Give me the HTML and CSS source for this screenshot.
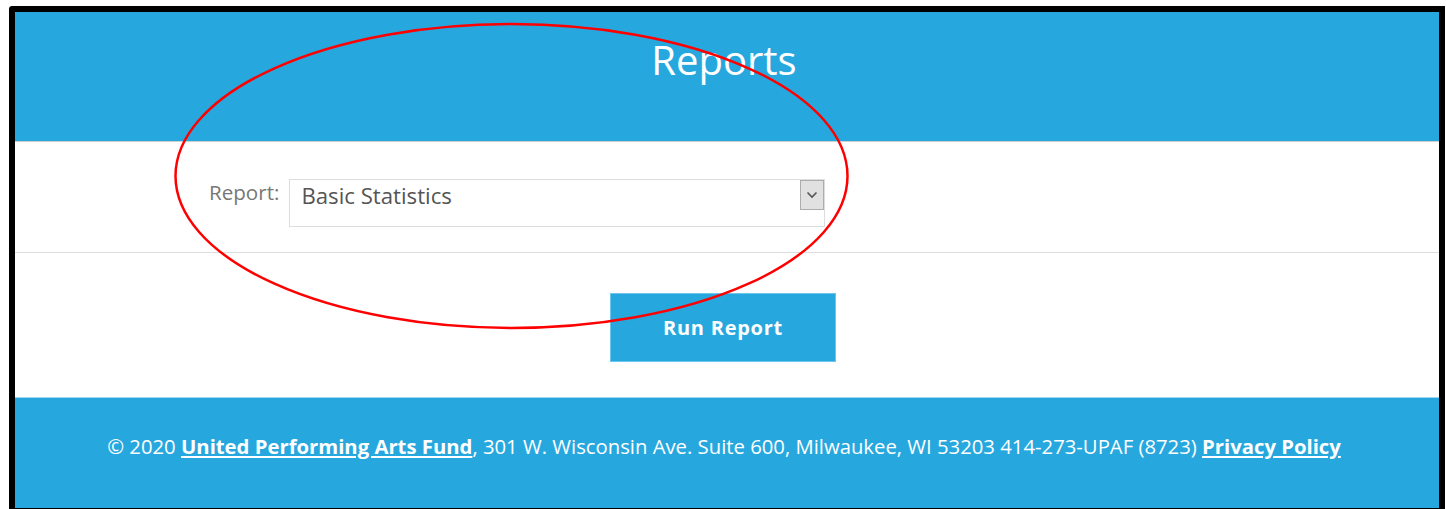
FILE: index.html
```html
<!DOCTYPE html>
<html lang="en">
<head>
<meta charset="utf-8">
<title>Reports</title>
<link rel="stylesheet" href="styles.css">
</head>
<body>
<div class="frame">
  <header class="banner">
    <h1 class="banner-title">Reports</h1>
  </header>

  <section class="filters">
    <div class="field">
      <label class="field-label">Report:</label>
      <div class="select">
        <span class="select-value">Basic Statistics</span>
        <span class="select-arrow">
          <svg width="12" height="8" viewBox="0 0 12 8" aria-hidden="true">
            <path d="M1.5 1.5 L6 6 L10.5 1.5" fill="none" stroke="#555" stroke-width="1.6"/>
          </svg>
        </span>
      </div>
    </div>
  </section>

  <section class="actions">
    <button class="run-btn" type="button">Run Report</button>
  </section>

  <footer class="site-footer">
    <p class="footer-text">© 2020 <a href="#">United Performing Arts Fund</a>, 301 W. Wisconsin Ave. Suite 600, Milwaukee, WI 53203 414-273-UPAF (8723) <a href="#">Privacy Policy</a></p>
  </footer>
</div>

<!-- highlight ring drawn over the report picker -->
<svg class="callout" width="1446" height="509" viewBox="0 0 1446 509" aria-hidden="true">
  <ellipse cx="511.5" cy="176" rx="336" ry="152" fill="none" stroke="#f00" stroke-width="2.5"/>
</svg>
</body>
</html>
```

FILE: styles.css
```css
* {
  box-sizing: border-box;
}

html,
body {
  margin: 0;
  padding: 0;
  background: #fff;
  overflow: hidden;
  height: 509px;
}

body {
  position: relative;
  font-family: "Open Sans", "Noto Sans", sans-serif;
}

.frame {
  margin: 6px 1px 0 9px;
  border: 6px solid #000;
  border-top-left-radius: 3px;
  display: flex;
  flex-direction: column;
}

/* page banner */
.banner {
  height: 130px;
  background: #26a8df;
  border-bottom: 1px solid #cfcfcf;
  padding-top: 21px;
}

.banner-title {
  margin: 0;
  text-align: center;
  color: #fff;
  font-weight: 400;
  font-size: 40px;
  line-height: 54px;
  padding-right: 6px;
}

/* report picker row */
.filters {
  height: 111px;
  padding: 37px 0 0 194px;
  border-bottom: 1px solid #ddd;
}

.field {
  display: flex;
  align-items: flex-start;
  gap: 10px;
}

.field-label {
  font-size: 20.6px;
  line-height: 27px;
  color: #777;
}

.select {
  width: 536px;
  height: 48px;
  border: 1px solid #ddd;
  display: flex;
  justify-content: space-between;
  align-items: flex-start;
}

.select-value {
  font-size: 22.2px;
  line-height: 30px;
  padding: 1px 0 0 11px;
  color: #555;
}

.select-arrow {
  width: 24px;
  height: 30px;
  background: #e1e1e1;
  border: 1px solid #adadad;
  display: flex;
  align-items: center;
  justify-content: center;
}

/* action row */
.actions {
  height: 144px;
  display: flex;
  justify-content: center;
  align-items: flex-start;
  padding: 40px 8px 0 0;
}

.run-btn {
  width: 226px;
  height: 69px;
  background: #26a8df;
  border: 1px solid #6cc5ec;
  color: #fff;
  font-family: "Open Sans", "Noto Sans", sans-serif;
  font-weight: 700;
  font-size: 20px;
  letter-spacing: 0.75px;
  padding: 0;
  cursor: pointer;
}

/* footer */
.site-footer {
  height: 111px;
  background: #26a8df;
  border-top: 1px solid #9fd6f0;
  padding-top: 35px;
}

.footer-text {
  margin: 0;
  text-align: center;
  color: #fff;
  font-size: 20.3px;
  line-height: 27px;
  padding-right: 6px;
}

.footer-text a {
  color: #fff;
  font-weight: 700;
  text-decoration: underline;
}

.callout {
  position: absolute;
  top: 0;
  left: 0;
  pointer-events: none;
}
```
